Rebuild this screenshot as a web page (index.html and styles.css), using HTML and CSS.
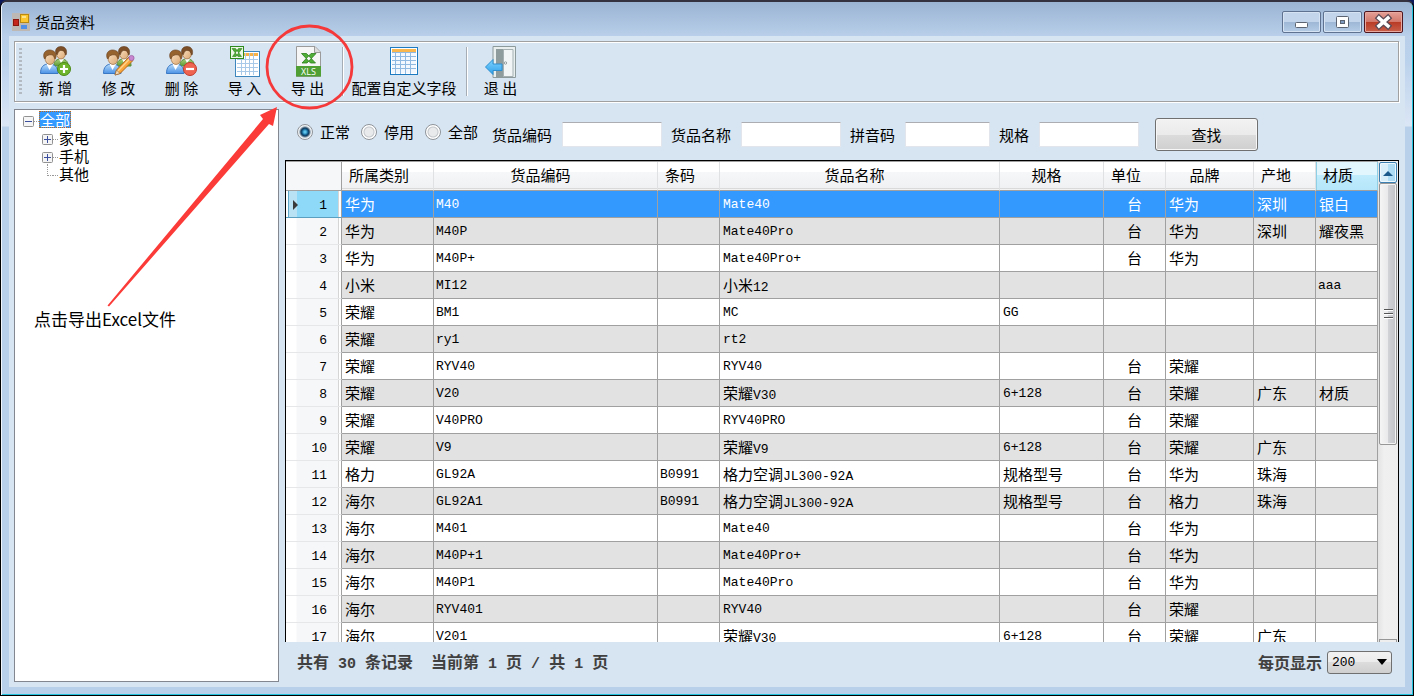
FILE: index.html
```html
<!DOCTYPE html>
<html lang="zh-CN">
<head>
<meta charset="utf-8">
<title>货品资料</title>
<link rel="stylesheet" href="styles.css">
</head>
<body>
<svg class="defs" width="0" height="0" aria-hidden="true">
  <defs>
    <linearGradient id="g-blue" x1="0" y1="0" x2="0" y2="1"><stop offset="0" stop-color="#b9dcfb"/><stop offset="1" stop-color="#4a92e6"/></linearGradient>
    <linearGradient id="g-green" x1="0" y1="0" x2="0" y2="1"><stop offset="0" stop-color="#a9cf7c"/><stop offset="1" stop-color="#5d9a35"/></linearGradient>
    <linearGradient id="g-face" x1="0" y1="0" x2="1" y2="1"><stop offset="0" stop-color="#fbe3c6"/><stop offset="1" stop-color="#dba771"/></linearGradient>
    <linearGradient id="g-arrow" x1="0" y1="0" x2="0" y2="1"><stop offset="0" stop-color="#7fd4ff"/><stop offset="1" stop-color="#2f9fe8"/></linearGradient>
    <symbol id="users" viewBox="0 0 32 32">
      <path d="M14 19c0-4 3-6 7-6s7 2 7 6v1H14z" fill="url(#g-green)" stroke="#5f8f3c"/>
      <path d="M19 13l2 4 3-4z" fill="#fff"/>
      <ellipse cx="21" cy="7.500" rx="4.500" ry="5.500" fill="url(#g-face)" stroke="#9a6a3c" stroke-width=".7"/>
      <path d="M16 8c-1.500-4.500 1-7.500 5-7.500s6.500 3 5.300 8c-.6 1-1 .5-1.300-1-.7-2.500-2.500-3.500-4.500-3-2 .5-2.500 2-3 4z" fill="#7d4f28" stroke="#5f3a1c" stroke-width=".6"/>
      <path d="M.5 27.500C.5 21 3.500 18 9 18s9 3 9 9.500z" fill="url(#g-blue)" stroke="#3a78c4"/>
      <path d="M6.500 18l3 6 3.500-6z" fill="#fff"/>
      <ellipse cx="10" cy="12" rx="5" ry="6.500" fill="url(#g-face)" stroke="#9a6a3c" stroke-width=".7"/>
      <path d="M4.300 12.500C2.500 8 5 4 9.500 4s8 3.500 6 8.500c-.6.800-1 0-1.300-1.500-.8-2-2.500-2.500-4.500-2.200-2.500.4-4 1.200-4.400 3.700z" fill="#96632f" stroke="#6b421d" stroke-width=".7"/>
    </symbol>
    <symbol id="plus-box" viewBox="0 0 11 11">
      <rect x=".5" y=".5" width="10" height="10" rx="1" fill="#f5f5f5" stroke="#919191"/>
      <path d="M2 5.500h7M5.500 2v7" stroke="#3b4f9e"/>
    </symbol>
    <symbol id="minus-box" viewBox="0 0 11 11">
      <rect x=".5" y=".5" width="10" height="10" rx="1" fill="#f5f5f5" stroke="#919191"/>
      <path d="M2 5.500h7" stroke="#3b4f9e"/>
    </symbol>
  </defs>
</svg>

<div class="window">
  <header class="titlebar">
    <svg class="app-icon" viewBox="0 0 18 18" aria-hidden="true">
      <rect width="18" height="18" fill="#bdb8b4"/>
      <rect x="8.500" y="1.500" width="8" height="8" fill="#fcc62e" stroke="#b98a10"/>
      <rect x="1.500" y="6.500" width="5" height="6" fill="#c4261b" stroke="#8a150e"/>
      <rect x="9" y="12" width="6" height="4" fill="#4f8fe8"/>
      <rect x="10" y="3" width="4" height="2" fill="#fde38a"/>
    </svg>
    <h1 class="title">货品资料</h1>
    <div class="controls">
      <button class="control" aria-label="最小化"><svg viewBox="0 0 37 20"><rect x="12.500" y="10.500" width="12" height="5" rx="1" fill="#fff" stroke="#5b6470"/></svg></button>
      <button class="control" aria-label="最大化"><svg viewBox="0 0 37 20"><rect x="12.500" y="4.500" width="12" height="11" rx="1" fill="#fff" stroke="#5b6470"/><rect x="16.500" y="8.500" width="4" height="3" fill="#7f9cc0" stroke="#5b6470"/></svg></button>
      <button class="control control-close" aria-label="关闭"><svg viewBox="0 0 37 20"><path d="M14 6l9 8M23 6l-9 8" stroke="#5b4a56" stroke-width="6" stroke-linecap="square"/><path d="M14 6l9 8M23 6l-9 8" stroke="#fff" stroke-width="3.500" stroke-linecap="square"/></svg></button>
    </div>
  </header>

  <main class="client">
    <nav class="toolbar" aria-label="工具栏">
      <span class="grip"></span>
      <button class="tool">
        <svg class="tool-icon" viewBox="0 0 32 32"><use href="#users"/><circle cx="24" cy="23" r="6.500" fill="#6fb52c" stroke="#4b8a16"/><path d="M24 19v8M20 23h8" stroke="#fff" stroke-width="2.200"/></svg>
        <span>新 增</span>
      </button>
      <button class="tool">
        <svg class="tool-icon" viewBox="0 0 32 32"><use href="#users"/><path d="M12 29l1.500-5L26 11l4 3.500L17 27.500z" fill="#f9a53a" stroke="#b4681a"/><path d="M14.500 25.500L27.500 12" stroke="#fdd28a" stroke-width="1.500"/><path d="M12 29l1.500-5 3.500 3.500z" fill="#f6dcb8" stroke="#8b6136" stroke-width=".6"/><circle cx="28.500" cy="12" r="2.600" fill="#c986d0" stroke="#955a9d" stroke-width=".7"/></svg>
        <span>修 改</span>
      </button>
      <button class="tool">
        <svg class="tool-icon" viewBox="0 0 32 32"><use href="#users"/><circle cx="24" cy="23" r="6.500" fill="#ef6351" stroke="#c23a2b"/><path d="M20 23h8" stroke="#fff" stroke-width="2.200"/></svg>
        <span>删 除</span>
      </button>
      <button class="tool">
        <svg class="tool-icon" viewBox="0 0 32 32">
          <rect x="6.500" y="5.500" width="24" height="25" fill="#fff" stroke="#3c86bd"/>
          <rect x="8" y="7" width="21" height="3" fill="#f7b24a"/>
          <path d="M8 13.500h21M8 17.500h21M8 21.500h21M8 25.500h21M12.500 7v22M16.500 7v22M20.500 7v22M24.500 7v22" stroke="#a9c9e8"/>
          <rect x="1.500" y=".5" width="13" height="12" fill="#eef8e6" stroke="#2f8a1d"/>
          <path d="M3 2.500h3.500l6 8H9zM13 2.500H9.500l-6 8H7z" fill="#4fae35" stroke="#2c7d1b" stroke-width=".6"/>
        </svg>
        <span>导 入</span>
      </button>
      <button class="tool">
        <svg class="tool-icon" viewBox="0 0 32 32">
          <path d="M4.500.5H23l5.500 5.500v24.500h-24z" fill="#f6f6f6" stroke="#9b9b9b"/>
          <path d="M22.500 1v5.500H28" fill="#dcdcdc" stroke="#9b9b9b"/>
          <rect x="4" y="20" width="25" height="10.500" fill="#4f9f35"/>
          <path d="M9.500 7.500h5l9 9.500h-5zM24 7.500h-5l-9 9.500h5z" fill="#4fae35" stroke="#2c7d1b" stroke-width=".8"/>
          <text class="xls" x="16.500" y="28.500" text-anchor="middle">XLS</text>
        </svg>
        <span>导 出</span>
      </button>
      <span class="separator"></span>
      <button class="tool tool-wide">
        <svg class="tool-icon" viewBox="0 0 32 32">
          <rect x="2.500" y="1.500" width="27" height="27" fill="#fff" stroke="#1b7ac0"/>
          <rect x="4" y="7" width="24" height="20" fill="#f2f8fd"/>
          <path d="M4 6.500h24M4 10.500h24M4 14.500h24M4 18.500h24M4 22.500h24M7.500 3v25M12.500 3v25M17.500 3v25M22.500 3v25" stroke="#8fb9e0"/>
          <rect x="4" y="3" width="24" height="3" fill="#f9b74d"/>
        </svg>
        <span>配置自定义字段</span>
      </button>
      <span class="separator"></span>
      <button class="tool">
        <svg class="tool-icon" viewBox="0 0 32 32">
          <path d="M8 .5h22.500v31H8z" fill="#e9eeee" stroke="#8c9a9c"/>
          <path d="M11 3h8v28h-8z" fill="#8e9c9e"/>
          <path d="M18.500 3.500H28v27h-9.500z" fill="#f1f5f5" stroke="#a4b0b2"/>
          <circle cx="20.500" cy="17" r="1.200" fill="#fff" stroke="#7b888a" stroke-width=".8"/>
          <path d="M.5 21L8 13.500V18h9v6.500H8v4z" fill="url(#g-arrow)" stroke="#2d8fd0"/>
        </svg>
        <span>退 出</span>
      </button>
    </nav>

    <div class="workspace">
      <aside class="tree-pane">
        <ul class="tree">
          <li>
            <div class="node"><button class="toggle" aria-label="折叠"><svg viewBox="0 0 11 11"><use href="#minus-box"/></svg></button><span class="dots"></span><span class="label selected">全部</span></div>
            <ul class="branch">
              <li class="node"><button class="toggle" aria-label="展开"><svg viewBox="0 0 11 11"><use href="#plus-box"/></svg></button><span class="dots"></span><span class="label">家电</span></li>
              <li class="node"><button class="toggle" aria-label="展开"><svg viewBox="0 0 11 11"><use href="#plus-box"/></svg></button><span class="dots"></span><span class="label">手机</span></li>
              <li class="node"><span class="leaf"></span><span class="dots"></span><span class="label">其他</span></li>
            </ul>
          </li>
        </ul>
      </aside>

      <section class="content">
        <form class="filter" onsubmit="return false">
          <div class="states">
            <label><input type="radio" name="state" checked>正常</label>
            <label><input type="radio" name="state">停用</label>
            <label><input type="radio" name="state">全部</label>
          </div>
          <label class="field">货品编码<input type="text"></label>
          <label class="field">货品名称<input type="text"></label>
          <label class="field">拼音码<input type="text" class="short"></label>
          <label class="field">规格<input type="text"></label>
          <button class="search" type="submit">查找</button>
        </form>

        <div class="grid">
          <div class="grid-body">
            <table class="goods">
              <colgroup><col class="w-index"><col class="w-type"><col class="w-code"><col class="w-small"><col class="w-name"><col class="w-spec"><col class="w-small"><col class="w-brand"><col class="w-small"><col class="w-small"></colgroup>
              <thead>
                <tr><th class="corner"></th><th class="left">所属类别</th><th>货品编码</th><th class="left">条码</th><th>货品名称</th><th>规格</th><th class="left">单位</th><th>品牌</th><th class="left">产地</th><th class="left sorted">材质</th></tr>
              </thead>
              <tbody>
                <tr class="current"><th scope="row">1</th><td>华为</td><td>M40</td><td></td><td>Mate40</td><td></td><td>台</td><td>华为</td><td>深圳</td><td>银白</td></tr>
                <tr><th scope="row">2</th><td>华为</td><td>M40P</td><td></td><td>Mate40Pro</td><td></td><td>台</td><td>华为</td><td>深圳</td><td>耀夜黑</td></tr>
                <tr><th scope="row">3</th><td>华为</td><td>M40P+</td><td></td><td>Mate40Pro+</td><td></td><td>台</td><td>华为</td><td></td><td></td></tr>
                <tr><th scope="row">4</th><td>小米</td><td>MI12</td><td></td><td><span class="zh">小米</span>12</td><td></td><td></td><td></td><td></td><td class="latin">aaa</td></tr>
                <tr><th scope="row">5</th><td>荣耀</td><td>BM1</td><td></td><td>MC</td><td>GG</td><td></td><td></td><td></td><td></td></tr>
                <tr><th scope="row">6</th><td>荣耀</td><td>ry1</td><td></td><td>rt2</td><td></td><td></td><td></td><td></td><td></td></tr>
                <tr><th scope="row">7</th><td>荣耀</td><td>RYV40</td><td></td><td>RYV40</td><td></td><td>台</td><td>荣耀</td><td></td><td></td></tr>
                <tr><th scope="row">8</th><td>荣耀</td><td>V20</td><td></td><td><span class="zh">荣耀</span>V30</td><td>6+128</td><td>台</td><td>荣耀</td><td>广东</td><td>材质</td></tr>
                <tr><th scope="row">9</th><td>荣耀</td><td>V40PRO</td><td></td><td>RYV40PRO</td><td></td><td>台</td><td>荣耀</td><td></td><td></td></tr>
                <tr><th scope="row">10</th><td>荣耀</td><td>V9</td><td></td><td><span class="zh">荣耀</span>V9</td><td>6+128</td><td>台</td><td>荣耀</td><td>广东</td><td></td></tr>
                <tr><th scope="row">11</th><td>格力</td><td>GL92A</td><td>B0991</td><td><span class="zh">格力空调</span>JL300-92A</td><td><span class="zh">规格型号</span></td><td>台</td><td>华为</td><td>珠海</td><td></td></tr>
                <tr><th scope="row">12</th><td>海尔</td><td>GL92A1</td><td>B0991</td><td><span class="zh">格力空调</span>JL300-92A</td><td><span class="zh">规格型号</span></td><td>台</td><td>格力</td><td>珠海</td><td></td></tr>
                <tr><th scope="row">13</th><td>海尔</td><td>M401</td><td></td><td>Mate40</td><td></td><td>台</td><td>华为</td><td></td><td></td></tr>
                <tr><th scope="row">14</th><td>海尔</td><td>M40P+1</td><td></td><td>Mate40Pro+</td><td></td><td>台</td><td>华为</td><td></td><td></td></tr>
                <tr><th scope="row">15</th><td>海尔</td><td>M40P1</td><td></td><td>Mate40Pro</td><td></td><td>台</td><td>华为</td><td></td><td></td></tr>
                <tr><th scope="row">16</th><td>海尔</td><td>RYV401</td><td></td><td>RYV40</td><td></td><td>台</td><td>荣耀</td><td></td><td></td></tr>
                <tr><th scope="row">17</th><td>海尔</td><td>V201</td><td></td><td><span class="zh">荣耀</span>V30</td><td>6+128</td><td>台</td><td>荣耀</td><td>广东</td><td></td></tr>
              </tbody>
            </table>
          </div>
          <div class="scrollbar">
            <button class="scroll-up" aria-label="向上滚动"><svg viewBox="0 0 10 6"><path d="M0 6l5-5 5 5z" fill="#1c5a8c"/></svg></button>
            <div class="thumb"><i></i><i></i><i></i></div>
            <div class="scroll-end"></div>
          </div>
        </div>

        <footer class="pager">
          <p class="summary"><span>共有</span> 30 <span>条记录</span>  <span>当前第</span> 1 <span>页</span> / <span>共</span> 1 <span>页</span></p>
          <label for="page-size">每页显示</label>
          <span class="select-box">
            <select id="page-size"><option>200</option></select>
            <svg viewBox="0 0 10 6" aria-hidden="true"><path d="M0 0h10L5 6z" fill="#000"/></svg>
          </span>
        </footer>
      </section>
    </div>
  </main>
</div>

<p class="note">点击导出Excel文件</p>
<svg class="marks" width="370" height="320" viewBox="0 0 370 320" aria-hidden="true">
  <ellipse cx="309.500" cy="67" rx="42.500" ry="41" fill="none" stroke="#f5393a" stroke-width="2.800"/>
  <path d="M277 107l-17 8 3 4L107.500 305.500l1.500 1L269 124l4 2z" fill="#fb3b38"/>
</svg>
</body>
</html>
```
FILE: styles.css
```css
* { box-sizing: border-box; }

body {
  margin: 0;
  height: 100vh;
  overflow: hidden;
  background: #0c1a5c;
  color: #000;
  font: 15px/18px "Noto Sans CJK SC", sans-serif;
}

ul, p, h1 { margin: 0; padding: 0; }
ul { list-style: none; }
button, input, select { font: inherit; color: inherit; }
.defs { position: absolute; }

.window {
  display: flex;
  flex-direction: column;
  height: 100vh;
  padding: 0 8px 8px;
  border: 1px solid #000;
  border-top: 2px solid #35323f;
  border-radius: 7px 7px 0 0;
  background: linear-gradient(#9ab4d2 0, #b9cfea 34px, #bbd2ec 60px, #dbe6f5 124px, #b9d0ea 125px);
  box-shadow: inset 1px 0 #f0f5fb, inset -1px -1px #23c3de;
}

/* Title bar */
.titlebar {
  display: flex;
  align-items: center;
  gap: 5px;
  flex: none;
  height: 34px;
  padding: 5px 2px 0 3px;
}
.app-icon { width: 18px; height: 18px; }
.title { flex: 1; font-size: 15px; font-weight: 400; }
.controls { display: flex; gap: 2px; }
.control {
  width: 39px;
  height: 22px;
  padding: 0;
  border: 1px solid #5f7390;
  border-radius: 2px;
  background: linear-gradient(#c3d5ea 0 50%, #9db7d5 50%, #b5cce6);
  box-shadow: inset 0 0 0 1px #d5e3f2;
}
.control svg { display: block; width: 37px; height: 20px; }
.control-close {
  border-color: #4f1620;
  background: linear-gradient(#e4a097 0, #d3796c 48%, #b93a25 50%, #c9604a);
  box-shadow: inset 0 0 0 1px #e8a9a0;
}

/* Client area */
.client {
  display: flex;
  flex-direction: column;
  flex: 1;
  min-height: 0;
  gap: 7px;
  padding: 5px 6px 5px 5px;
  background: #d7e4f1;
}
.toolbar {
  display: flex;
  align-items: center;
  flex: none;
  height: 61px;
  padding-left: 4px;
  border: 1px solid #a0a0a0;
  box-shadow: inset 1px 1px #fff, 1px 1px #fff;
}
.grip {
  width: 3px;
  height: 48px;
  margin-right: 2px;
  background: repeating-linear-gradient(#b3bac2 0 2px, transparent 2px 4px);
}
.tool {
  display: flex;
  flex-direction: column;
  align-items: center;
  gap: 1px;
  width: 63px;
  padding: 0;
  border: 0;
  background: none;
  white-space: nowrap;
}
.tool-wide { width: 118px; }
.tool-icon { width: 32px; height: 32px; }
.xls { font: 9px "Open Sans", sans-serif; fill: #fff; }
.separator {
  width: 2px;
  height: 49px;
  margin: 0 1px 0 3px;
  border-left: 1px solid #a7adb5;
  background: #fff;
}

.workspace { display: flex; flex: 1; min-height: 0; gap: 6px; }
.tree-pane {
  flex: none;
  width: 265px;
  border: 1px solid #828790;
  background: #fff;
}
.tree { padding: 0 8px; }
.branch { padding-left: 19px; }
.node { display: flex; align-items: center; height: 18px; }
.toggle { width: 11px; height: 15px; padding: 4px 0 0; border: 0; background: none; }
.toggle svg { display: block; width: 11px; height: 11px; }
.dots { width: 5px; margin-top: 4px; border-top: 1px dotted #999; }
.leaf {
  align-self: flex-start;
  width: 6px;
  height: 12px;
  margin-left: 5px;
  border-left: 1px dotted #999;
  border-bottom: 1px dotted #999;
}
.label { padding: 0 1px; line-height: 17px; }
.selected {
  background: #3399ff;
  color: #fff;
  outline: 1px dotted #c66a14;
  outline-offset: -1px;
}

.content { display: flex; flex-direction: column; flex: 1; min-width: 0; }

/* Filter row */
.filter {
  display: flex;
  align-items: center;
  gap: 9px;
  flex: none;
  height: 51px;
  padding-left: 12px;
}
.states { display: flex; gap: 11px; margin: 0 5px 5px 0; }
.states label { display: flex; align-items: center; gap: 7px; }
.states input {
  appearance: none;
  width: 16px;
  height: 16px;
  margin: 0;
  border: 1px solid #8f9499;
  border-radius: 50%;
  background: radial-gradient(circle, #e8eaec 0 4px, #c2c5c8 5px, #fff 6px);
}
.states input:checked {
  background: radial-gradient(circle at 50% 50%, #5cc4ea 0 1px, #0f5b8c 3px, #143a5a 4px, #dfe5ea 6px, #fff 7px);
}
.field { display: flex; align-items: center; gap: 10px; }
.field input {
  width: 100px;
  height: 25px;
  padding: 0 4px;
  border: 1px solid #e2e6ec;
  border-top-color: #abadb3;
  border-radius: 1px;
  background: #fff;
}
.field .short { width: 85px; }
.search {
  width: 103px;
  height: 33px;
  margin-left: 7px;
  border: 1px solid #707070;
  border-radius: 3px;
  background: linear-gradient(#f2f2f2 0, #ebebeb 50%, #dcdcdc 50%, #cfcfcf);
  box-shadow: inset 0 0 0 1px #f7f7f7;
}

/* Data grid */
.grid {
  display: flex;
  flex: 1;
  min-height: 0;
  border: 1px solid #000;
  border-bottom: 0;
  background: #fff;
}
.grid-body { flex: 1; min-width: 0; overflow: hidden; }
.goods {
  width: 100%;
  table-layout: fixed;
  border-collapse: separate;
  border-spacing: 0;
  border-top: 1px solid #a0a0a0;
}
.w-index { width: 56px; }
.w-type { width: 92px; }
.w-code { width: 224px; }
.w-small { width: 62px; }
.w-spec { width: 104px; }
.w-brand { width: 88px; }

.goods th, .goods td { height: 27px; padding: 0 3px; font-weight: 400; text-align: left; white-space: nowrap; }
.goods thead th {
  height: 29px;
  padding: 0 18px 2px 8px;
  border-right: 1px solid #e0e1e3;
  border-bottom: 1px solid #a0a0a0;
  background: linear-gradient(#fff 0 36%, #f6f7f8 36%, #f0f1f2 94%, #d5d5d5 94%, #fff);
  text-align: center;
}
.goods thead .left { padding-right: 0; padding-left: 7px; text-align: left; }
.goods thead .corner { border-right-color: #a0a0a0; background: #f6f7f9; }
.goods thead .sorted {
  border-right-color: #8fcfe6;
  background: linear-gradient(#e2f6fd 0 45%, #c1ecfc 45%, #b5e6fa);
  box-shadow: inset 1px 0 #8fcfe6;
}
.goods tbody th {
  padding: 3px 14px 0 0;
  border-right: 1px solid #a0a0a0;
  border-bottom: 1px solid #e6e7e9;
  background: linear-gradient(90deg, #fff 0 10px, #f6f7f9 11px 52px, #d5d5d5 52px 53px, #fff 53px);
  font: 13px "Liberation Mono", monospace;
  text-align: right;
}
.goods td {
  border-right: 1px solid #a0a0a0;
  border-bottom: 1px solid #a0a0a0;
}
.goods tbody tr:nth-child(even) td { background: #e2e2e2; }
.goods td:nth-child(3), .goods td:nth-child(4), .goods td:nth-child(5), .goods td:nth-child(6), .goods .latin {
  padding-left: 2px;
  font: 13px "Liberation Mono", monospace;
}
.goods td:nth-child(5), .goods td:nth-child(6) { padding-left: 3px; }
.goods .zh { font: 15px/18px "Noto Sans CJK SC", sans-serif; }
.goods td:nth-child(7) { text-align: center; }
.goods .current td { background: #3399ff; color: #fff; }
.goods .current th {
  border-bottom-color: #5b9fc0;
  background: linear-gradient(90deg, #fff 0 2px, #62a9c9 2px 3px, #b9e3f4 3px 11px, #8ed8f8 11px 52px, #d5d5d5 52px 53px, #fff 53px);
}
.goods .current th::before {
  content: "";
  float: left;
  margin: 2px 0 0 7px;
  border: 5px solid transparent;
  border-right: 0;
  border-left-color: #3a3a3a;
}

/* Scroll bar */
.scrollbar {
  display: flex;
  flex-direction: column;
  flex: none;
  width: 20px;
  padding: 1px 1px 0;
  background: linear-gradient(90deg, #e3e3e3, #f0f0f0 6px, #eee);
}
.scroll-up {
  display: grid;
  place-items: center;
  flex: none;
  height: 21px;
  padding: 0;
  border: 1px solid #3c7fb1;
  border-radius: 2px;
  background: linear-gradient(90deg, #d9f0fb 0 50%, #b3dff5 50%, #a9d8f2);
  box-shadow: inset 0 0 0 1px #f0f9fe;
}
.scroll-up svg { width: 10px; height: 6px; }
.thumb {
  display: flex;
  flex-direction: column;
  justify-content: center;
  align-items: center;
  gap: 2px;
  flex: 0 0 54.500%;
  border: 1px solid #979797;
  border-radius: 2px;
  background: linear-gradient(90deg, #f5f5f5, #e9e9eb 50%, #d2d3d6 50%, #c2c3c7);
  box-shadow: inset 0 0 0 1px #f4f4f4;
}
.thumb i { width: 9px; height: 2px; border-top: 1px solid #555; background: #fff; }
.scroll-end { height: 3px; margin-top: auto; border: 1px solid #979797; border-bottom: 0; background: #eee; }

/* Pager */
.pager {
  display: flex;
  align-items: center;
  gap: 5px;
  flex: none;
  height: 40px;
  padding: 0 7px 0 12px;
  color: #404040;
  font: 700 16px/20px "Noto Sans CJK SC", sans-serif;
}
.summary { flex: 1; padding-top: 2px; font: 700 15px/20px "Liberation Mono", monospace; white-space: pre; }
.summary span { font: 700 16px/20px "Noto Sans CJK SC", sans-serif; }
.select-box { display: grid; align-items: center; color: #000; }
.select-box select, .select-box svg { grid-area: 1 / 1; }
.select-box select {
  appearance: none;
  width: 65px;
  height: 23px;
  padding: 0 4px;
  border: 1px solid #707070;
  border-radius: 3px;
  background: linear-gradient(#f2f2f2 0, #ebebeb 50%, #dcdcdc 50%, #cfcfcf);
  font: 13px "Liberation Mono", monospace;
}
.select-box svg { justify-self: end; width: 10px; height: 6px; margin-right: 5px; pointer-events: none; }

/* Annotation over the window */
.note { position: absolute; left: 34px; top: 307px; font-size: 17px; line-height: 24px; }
.marks { position: absolute; left: 0; top: 0; pointer-events: none; }
```
